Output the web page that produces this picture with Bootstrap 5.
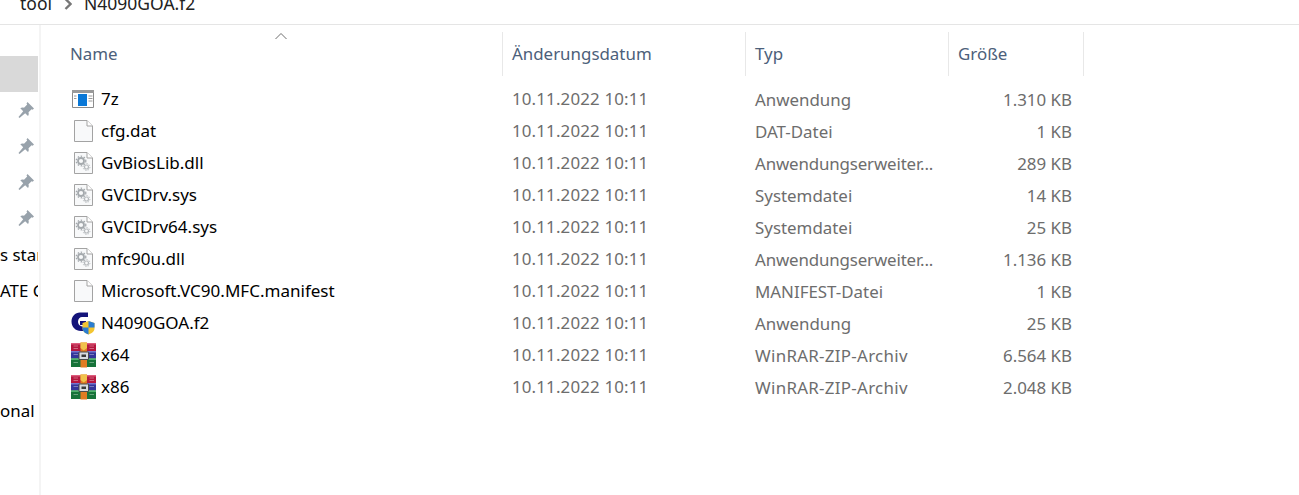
<!DOCTYPE html>
<html lang="de">
<head>
<meta charset="utf-8">
<title>N4090GOA.f2</title>
<link href="https://cdn.jsdelivr.net/npm/bootstrap@5.3.0/dist/css/bootstrap.min.css" rel="stylesheet">
<style>
html,body{height:495px;overflow:hidden;background:#fff}
body{font-family:"Noto Sans","Open Sans","Liberation Sans",sans-serif;font-size:16.9px;color:#000}
.crumbs{height:25px;border-bottom:1px solid #e5e5e5;overflow:hidden;color:#222;padding-left:20px;gap:12px;font-size:17.5px;line-height:20px}
.crumbs span{margin-top:-7px}
.crumbs svg{margin-top:-2px}
.shell{height:470px}
.side{width:41px;border-right:2px solid #f4f4f4;padding:31px 1px 0 0;flex:none}
.side-row{height:36px;white-space:nowrap;overflow:hidden;line-height:37px}
.side-row.sel{background:#d9d9d9}
.side-row.pinrow{padding-left:17px;padding-top:9px;line-height:0}
.side-gap{height:84px}
.listing{position:relative;flex:1;padding-top:7px}
.hdr,.line{display:grid;grid-template-columns:462px 243px 203px 135px}
.hdr{height:41px;color:#4c607a;line-height:44px}
.hdr>div{padding-left:9px;border-right:1px solid #e8e8e8}
.hdr>div:first-child{padding-left:29px}
.rows{padding-top:10px}
.line{height:32px;line-height:33px;color:#6d6d6d}
.line>div{padding-left:9px;white-space:nowrap}
.line>.fname{padding-left:30px;color:#000;display:flex;align-items:center;font-size:17.05px;line-height:32px;height:32px}
.line>.fdate{letter-spacing:.15px;line-height:32px}
.line>.fsize{padding:0 12px 0 0;text-align:right}
.line>.ftrunc{letter-spacing:-.15px}
.line>.farch{letter-spacing:.3px}
.ico{width:25px;height:26px;margin-right:5px;flex:none;display:block}
.caret-up{position:absolute;left:233px;top:7px}
</style>
</head>
<body>
<svg width="0" height="0" class="position-absolute">
<defs>
<symbol id="pg" viewBox="0 0 25 26">
<path d="M3.500 2.500H16L21.500 8V23.500H3.500Z" fill="#f8f9fa" stroke="#a3a3a3"/>
<path d="M16 2.500V8H21.500" fill="#fff" stroke="#a3a3a3"/>
</symbol>
<symbol id="gp" viewBox="0 0 25 26">
<use href="#pg"/>
<g fill="none" stroke="#a4a9ad">
<circle cx="10" cy="11" r="3" stroke-width="1.800"/>
<circle cx="10" cy="11" r="4.800" stroke-width="1.300" stroke-dasharray="1.500 1.600"/>
</g>
<g fill="none" stroke="#b7bbbe">
<circle cx="15.500" cy="17" r="2" stroke-width="1.200"/>
<circle cx="15.500" cy="17" r="3.400" stroke-width="1" stroke-dasharray="1.300 1.300"/>
</g>
</symbol>
<symbol id="rar" viewBox="0 0 25 26">
<path d="M0 1H25V9H0Z" fill="#b5173f"/><path d="M0 1H25V2.500H0Z" fill="#dd5d7d"/>
<path d="M0 9H25V16.500H0Z" fill="#34369a"/><path d="M0 9H25V10.500H0Z" fill="#7477cf"/>
<path d="M0 16.500H25V25H0Z" fill="#17733a"/><path d="M0 16.500H25V18H0Z" fill="#4fb36c"/>
<path d="M2.500 4H7M2.500 6.500H7M18.500 4H23M18.500 6.500H23M2.500 12.500H7M18.500 12.500H23M2.500 20.500H7M18.500 20.500H23" stroke="#fff" stroke-opacity=".35"/>
<path d="M9.500 .5H16V25.500H9.500Z" fill="#e07c22"/>
<path d="M9.500 .5H16V6L12.700 8.500 9.500 6Z" fill="#f1c24c"/>
<path d="M8 10H17.500V17.500H8Z" fill="#d9dce0" stroke="#4b4b4b"/>
<path d="M10.500 12.500H15V15H10.500Z" fill="#3a3a3a"/>
</symbol>
<symbol id="pin" viewBox="0 0 18 18">
<path d="M10.500 1L17 7.500 15.600 8.800 14.600 8.200 11.500 11.300C12 13 11.800 14 11 15L8.200 12.200 2.500 17 1.500 16 6.200 10.200 3.300 7.300C4.300 6.400 5.400 6.200 7 6.700L10.200 3.600 9.500 2.400Z" fill="#98a2ab"/>
</symbol>
</defs>
</svg>
<div class="crumbs d-flex align-items-start">
<span>tool</span>
<svg width="8" height="12" viewBox="0 0 8 12"><path d="M1.500 1L6.500 6 1.500 11" fill="none" stroke="#777" stroke-width="2.400"/></svg>
<span>N4090GOA.f2</span>
</div>
<div class="shell d-flex">
<div class="side">
<div class="side-row sel"></div>
<div class="side-row pinrow"><svg width="18" height="18"><use href="#pin"/></svg></div>
<div class="side-row pinrow"><svg width="18" height="18"><use href="#pin"/></svg></div>
<div class="side-row pinrow"><svg width="18" height="18"><use href="#pin"/></svg></div>
<div class="side-row pinrow"><svg width="18" height="18"><use href="#pin"/></svg></div>
<div class="side-row">s start</div>
<div class="side-row">ATE G</div>
<div class="side-gap"></div>
<div class="side-row">onal</div>
</div>
<div class="listing">
<svg class="caret-up" width="14" height="8" viewBox="0 0 14 8"><path d="M1.500 7L7 1.500 12.500 7" fill="none" stroke="#6e6e6e"/></svg>
<div class="hdr"><div>Name</div><div>Änderungsdatum</div><div>Typ</div><div>Größe</div></div>
<div class="rows">
<div class="line"><div class="fname"><svg class="ico" viewBox="0 0 25 26"><path d="M1.500 4.500H22.500V21.500H1.500Z" fill="#fff" stroke="#8c8c8c"/><path d="M1 4H23V7H1Z" fill="#9a9a9a"/><path d="M7 8H16V20H7Z" fill="#0a78d7"/><path d="M17.500 10H21.500M17.500 12.500H21.500M17.500 15H21.500M3 10H5.500M3 12.500H5.500" stroke="#9a9a9a"/></svg>7z</div><div class="fdate">10.11.2022 10:11</div><div>Anwendung</div><div class="fsize">1.310 KB</div></div>
<div class="line"><div class="fname"><svg class="ico"><use href="#pg"/></svg>cfg.dat</div><div class="fdate">10.11.2022 10:11</div><div>DAT-Datei</div><div class="fsize">1 KB</div></div>
<div class="line"><div class="fname"><svg class="ico"><use href="#gp"/></svg>GvBiosLib.dll</div><div class="fdate">10.11.2022 10:11</div><div class="ftrunc">Anwendungserweiter...</div><div class="fsize">289 KB</div></div>
<div class="line"><div class="fname"><svg class="ico"><use href="#gp"/></svg>GVCIDrv.sys</div><div class="fdate">10.11.2022 10:11</div><div>Systemdatei</div><div class="fsize">14 KB</div></div>
<div class="line"><div class="fname"><svg class="ico"><use href="#gp"/></svg>GVCIDrv64.sys</div><div class="fdate">10.11.2022 10:11</div><div>Systemdatei</div><div class="fsize">25 KB</div></div>
<div class="line"><div class="fname"><svg class="ico"><use href="#gp"/></svg>mfc90u.dll</div><div class="fdate">10.11.2022 10:11</div><div class="ftrunc">Anwendungserweiter...</div><div class="fsize">1.136 KB</div></div>
<div class="line"><div class="fname"><svg class="ico"><use href="#pg"/></svg>Microsoft.VC90.MFC.manifest</div><div class="fdate">10.11.2022 10:11</div><div>MANIFEST-Datei</div><div class="fsize">1 KB</div></div>
<div class="line"><div class="fname"><svg class="ico" viewBox="0 0 25 26"><path d="M17 2.500H9C4 2.500 .5 6.500 .5 11.500 .5 17 4.500 21 10 21H13V16.500C9 16.500 7 14.500 7 11.500 7 8.800 9 7 11 7H17Z" fill="#14147a"/><path d="M9 11H15V15H9Z" fill="#14147a"/><path d="M17.500 11L23.500 13V18.500C23.500 21.500 20.500 23.500 17.500 24.500 14.500 23.500 11.500 21.500 11.500 18.500V13Z" fill="#f3c531"/><path d="M17.500 11L23.500 13V17.500H17.500ZM17.500 17.500V24.500C14.500 23.500 11.500 21.500 11.500 17.500Z" fill="#2a7dd1"/></svg>N4090GOA.f2</div><div class="fdate">10.11.2022 10:11</div><div>Anwendung</div><div class="fsize">25 KB</div></div>
<div class="line"><div class="fname"><svg class="ico"><use href="#rar"/></svg>x64</div><div class="fdate">10.11.2022 10:11</div><div class="farch">WinRAR-ZIP-Archiv</div><div class="fsize">6.564 KB</div></div>
<div class="line"><div class="fname"><svg class="ico"><use href="#rar"/></svg>x86</div><div class="fdate">10.11.2022 10:11</div><div class="farch">WinRAR-ZIP-Archiv</div><div class="fsize">2.048 KB</div></div>
</div>
</div>
</div>
</body>
</html>
